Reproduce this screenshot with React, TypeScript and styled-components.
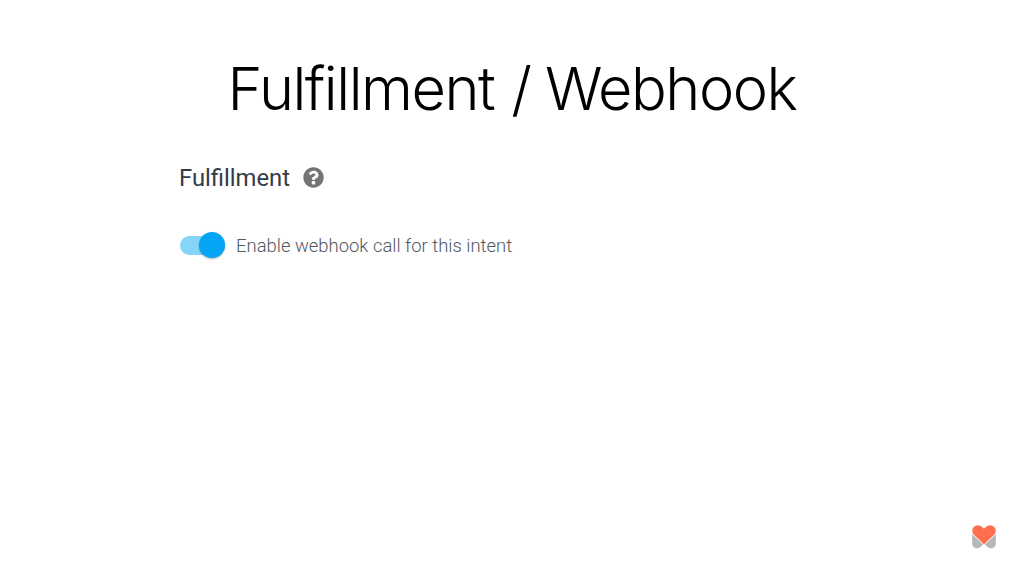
import styled, { createGlobalStyle } from "styled-components";
import { FaQuestionCircle } from "react-icons/fa";

const App = () => {
	return (
		<>
			<GlobalStyle />
			<Slide>
				<Title>
					<TitleWord $spacing={-1.5}>Fulfillment</TitleWord>
					<TitleWord $spacing={-4}>/</TitleWord>
					<TitleWord $spacing={-1.45}>Webhook</TitleWord>
				</Title>
				<Content>
					<SectionHeader>
						<h2>Fulfillment</h2>
						<FaQuestionCircle size={21} color="#757575" />
					</SectionHeader>
					<ToggleRow>
						<Track type="button" role="switch" aria-checked="true">
							<Thumb />
						</Track>
						<Label>Enable webhook call for this intent</Label>
					</ToggleRow>
				</Content>
				<Footer>
					<HeartLogo />
				</Footer>
			</Slide>
		</>
	);
};

export default App;

const HeartLogo = () => (
	<svg width="24" height="24" viewBox="0 0 24 24" aria-hidden="true">
		<path
			fill="#b3b8ba"
			d="M.2 9 12 19 23.8 9v9.4a4.9 4.9 0 0 1-8.4 3.4L12 18.6l-3.4 3.2A4.9 4.9 0 0 1 .2 18.4Z"
		/>
		<path
			fill="#ff6f4f"
			stroke="#fff"
			strokeWidth="1.3"
			paintOrder="stroke"
			d="M12 19.6 1.9 9.8A5.65 5.65 0 0 1 9.9 1.8L12 3.8 14.1 1.8a5.65 5.65 0 0 1 8 8Z"
		/>
	</svg>
);

const GlobalStyle = createGlobalStyle`
	* {
		box-sizing: border-box;
	}
	body {
		margin: 0;
		background: #fff;
	}
`;

const Slide = styled.main`
	display: flex;
	flex-direction: column;
	width: 1024px;
	height: 576px;
	padding: 52px 28px 27px;
	overflow: hidden;
	background: #fff;
`;

const Title = styled.h1`
	display: flex;
	justify-content: center;
	gap: 17px;
	margin: 0;
	height: 73px;
	color: #000;
	font-family: Inter, "Liberation Sans", sans-serif;
	font-size: 59.5px;
	font-weight: 300;
	line-height: 73px;
	white-space: nowrap;
`;

const TitleWord = styled.span<{ $spacing: number }>`
	letter-spacing: ${({ $spacing }) => $spacing}px;
`;

const Content = styled.section`
	flex: 1;
	padding: 37px 0 0 151px;
	font-family: Roboto, sans-serif;
`;

const SectionHeader = styled.header`
	display: flex;
	align-items: center;
	gap: 13px;
	height: 31px;
	h2 {
		margin: 0;
		color: #353a48;
		font-size: 23.8px;
		font-weight: 400;
		line-height: 30px;
	}
`;

const ToggleRow = styled.div`
	display: flex;
	align-items: center;
	gap: 11px;
	height: 29px;
	margin-top: 38px;
`;

const Track = styled.button`
	display: flex;
	align-items: center;
	justify-content: flex-end;
	width: 45px;
	height: 19px;
	margin: 0 0 1px 1px;
	padding: 0;
	border: 0;
	border-radius: 10px;
	background: #85d4fa;
`;

const Thumb = styled.span`
	flex: none;
	width: 26px;
	height: 26px;
	border-radius: 50%;
	background: #05a5f5;
	box-shadow: 0 1px 2px rgba(0, 0, 0, 0.3);
`;

const Label = styled.span`
	color: #53585f;
	font-size: 18.45px;
	font-weight: 300;
	line-height: 28px;
	white-space: nowrap;
`;

const Footer = styled.footer`
	display: flex;
	justify-content: flex-end;
	height: 24px;
`;
